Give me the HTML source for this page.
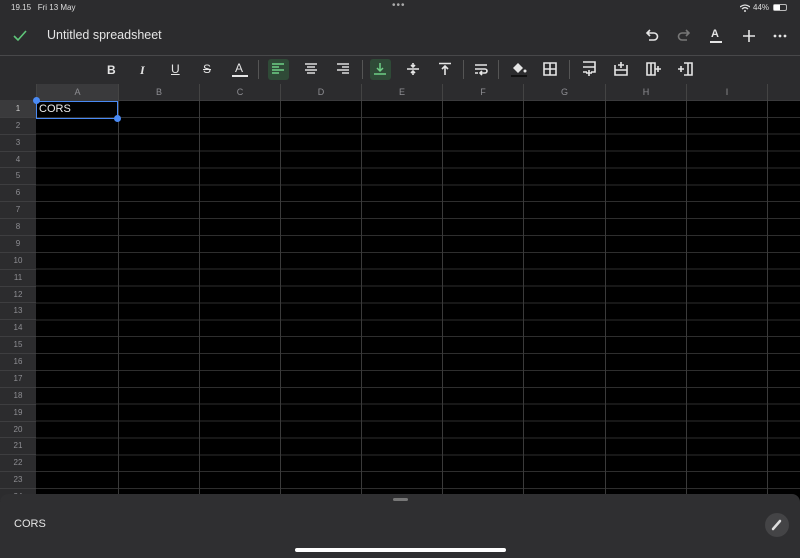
<!DOCTYPE html>
<html><head><meta charset="utf-8"><style>
*{margin:0;padding:0;box-sizing:border-box}
body{width:800px;height:558px;overflow:hidden;background:#000;font-family:"Liberation Sans",sans-serif;position:relative;color:#ddd}
.abs{position:absolute}
#top{left:0;top:0;width:800px;height:56px;background:#2c2c2e;border-bottom:1px solid #48484a}
#tb{left:0;top:56px;width:800px;height:28px;background:#2c2c2e}
#colh{left:0;top:84px;width:800px;height:17px;background:#2c2c2e;border-bottom:1px solid #3a3a3c}
.ch{position:absolute;top:0;height:17px;font-size:9px;color:#8e8e93;text-align:center;line-height:17px;border-left:1px solid #444}
#rowh{left:0;top:101px;width:36px;height:400px;background:#2c2c2e}
.rh{position:absolute;left:0;width:36px;height:16.87px;font-size:8px;color:#8e8e93;text-align:center;line-height:16px;border-bottom:1px solid #3e3e40}
#grid{left:36px;top:101px;width:764px;height:400px;
background-image:repeating-linear-gradient(to bottom,transparent 0,transparent 15.87px,#2e2e2e 15.87px,#2e2e2e 16.87px)}
.vl{position:absolute;top:101px;width:1px;height:400px;background:#3a3a3a}
#bot{left:0;top:494px;width:800px;height:64px;background:#2f2f31;border-radius:8px 8px 0 0}
svg{position:absolute}
.ic{stroke:#e5e5e5;fill:none;stroke-width:1.6}
</style></head><body>
<div id="top" class="abs">
 <div class="abs" style="left:11px;top:3px;font-size:8px;color:#ddd">19.15&nbsp;&nbsp;&nbsp;Fri 13 May</div>
 <div class="abs" style="left:392px;top:0px;font-size:10px;color:#aaa;letter-spacing:1px">•••</div>
 <svg style="left:740px;top:4px" width="10" height="8"><path d="M0 3 Q5 -1 10 3 M2 5 Q5 2 8 5" stroke="#ddd" fill="none" stroke-width="1.3"/><circle cx="5" cy="7" r="1" fill="#ddd"/></svg>
 <div class="abs" style="left:753px;top:3px;font-size:8px;color:#ddd">44%</div>
 <div class="abs" style="left:773px;top:4px;width:14px;height:7px;border:1px solid #bbb;border-radius:2px"><div style="width:6px;height:5px;background:#fff"></div></div>
 <svg style="left:12px;top:29px" width="16" height="14"><path d="M2 7 L6 11 L14 2" stroke="#5fc77a" stroke-width="1.6" fill="none"/></svg>
 <div class="abs" style="left:47px;top:28px;font-size:12.5px;color:#e5e5e5">Untitled spreadsheet</div>
 <svg style="left:645px;top:29px" width="14" height="14"><path class="ic" d="M3 4 H9 A3.5 3.5 0 0 1 9 11 H4 M5 1 L2 4 L5 7"/></svg>
 <svg style="left:677px;top:29px" width="14" height="14"><path d="M11 4 H5 A3.5 3.5 0 0 0 5 11 H10 M9 1 L12 4 L9 7" stroke="#777" fill="none" stroke-width="1.6"/></svg>
 <div class="abs" style="left:711px;top:28px;font-size:11px;font-weight:bold;color:#e5e5e5">A</div>
 <div class="abs" style="left:710px;top:41px;width:12px;height:2px;background:#e5e5e5"></div>
 <svg style="left:742px;top:29px" width="14" height="14"><path class="ic" d="M7 1 V13 M1 7 H13"/></svg>
 <svg style="left:773px;top:34px" width="14" height="4"><circle cx="2" cy="2" r="1.4" fill="#e5e5e5"/><circle cx="7" cy="2" r="1.4" fill="#e5e5e5"/><circle cx="12" cy="2" r="1.4" fill="#e5e5e5"/></svg>
</div>
<div id="tb" class="abs">
 <div class="abs" style="left:107px;top:7px;font-size:12px;font-weight:bold;color:#e5e5e5">B</div>
 <div class="abs" style="left:140px;top:7px;font-size:12px;font-style:italic;font-weight:bold;color:#e5e5e5;font-family:'Liberation Serif',serif">I</div>
 <div class="abs" style="left:171px;top:6px;font-size:12px;color:#e5e5e5;text-decoration:underline">U</div>
 <div class="abs" style="left:203px;top:6px;font-size:12px;color:#e5e5e5;text-decoration:line-through">S</div>
 <div class="abs" style="left:235px;top:5px;font-size:12px;color:#e5e5e5">A</div>
 <div class="abs" style="left:232px;top:19px;width:16px;height:2px;background:#e5e5e5"></div>
 <div class="abs" style="left:258px;top:4px;width:1px;height:19px;background:#555"></div>
 <div class="abs" style="left:268px;top:3px;width:21px;height:21px;background:#2f4a37;border-radius:3px"></div>
 <svg style="left:271px;top:6px" width="14" height="14"><path d="M1 2 H13 M1 5 H8 M1 8 H13 M1 11 H8" stroke="#6fcf86" stroke-width="1.5"/></svg>
 <svg style="left:304px;top:6px" width="14" height="14"><path d="M1 2 H13 M3 5 H11 M1 8 H13 M3 11 H11" stroke="#ddd" stroke-width="1.5"/></svg>
 <svg style="left:336px;top:6px" width="14" height="14"><path d="M1 2 H13 M6 5 H13 M1 8 H13 M6 11 H13" stroke="#ddd" stroke-width="1.5"/></svg>
 <div class="abs" style="left:362px;top:4px;width:1px;height:19px;background:#555"></div>
 <div class="abs" style="left:370px;top:3px;width:21px;height:21px;background:#2f4a37;border-radius:3px"></div>
 <svg style="left:373px;top:6px" width="14" height="14"><path d="M7 1 V9 M4 6 L7 9 L10 6 M1 12 H13" stroke="#6fcf86" stroke-width="1.5" fill="none"/></svg>
 <svg style="left:406px;top:6px" width="14" height="14"><path d="M1 7 H13 M7 1 V5 M5 3 L7 5 L9 3 M7 13 V9 M5 11 L7 9 L9 11" class="ic" stroke-width="1.3"/></svg>
 <svg style="left:438px;top:6px" width="14" height="14"><path d="M1 1.5 H13 M7 4 V13 M4 7 L7 4 L10 7" class="ic" stroke-width="1.4"/></svg>
 <div class="abs" style="left:463px;top:4px;width:1px;height:19px;background:#555"></div>
 <svg style="left:474px;top:6px" width="14" height="14"><path d="M1 3 H13 M1 7 H11 A2 2 0 0 1 11 11 H7 M8 9 L6 11 L8 13 M1 11 H4" class="ic" stroke-width="1.3"/></svg>
 <div class="abs" style="left:498px;top:4px;width:1px;height:19px;background:#555"></div>
 <svg style="left:510px;top:4px" width="18" height="18"><path d="M3 8 L8 3 L13 8 L8 13 Z" fill="#e5e5e5"/><circle cx="15" cy="11" r="1.5" fill="#e5e5e5"/><rect x="1" y="15" width="16" height="2" fill="#111"/></svg>
 <svg style="left:543px;top:6px" width="14" height="14"><path d="M1 1 H13 V13 H1 Z M7 1 V13 M1 7 H13" class="ic" stroke-width="1.4"/></svg>
 <div class="abs" style="left:569px;top:4px;width:1px;height:19px;background:#555"></div>
 <svg style="left:582px;top:5px" width="14" height="16"><path d="M1 1 H13 V11 H9 M5 11 H1 Z M1 6 H13 M7 9 V15 M4 12 H10" class="ic" stroke-width="1.3"/></svg>
 <svg style="left:614px;top:5px" width="14" height="16"><path d="M1 4 V14 H13 V4 M1 9 H13 M7 1 V7 M4 4 H10" class="ic" stroke-width="1.3"/></svg>
 <svg style="left:646px;top:5px" width="16" height="16"><path d="M1 2 H9 V14 H1 Z M5 2 V14 M9 8 H15 M12 5 V11" class="ic" stroke-width="1.3"/></svg>
 <svg style="left:677px;top:5px" width="16" height="16"><path d="M7 2 H15 V14 H7 M11 2 V14 M1 8 H7 M4 5 V11" class="ic" stroke-width="1.3"/></svg>
</div>
<div id="colh" class="abs">
 <div class="ch" style="left:36px;width:82px;background:#3a3a3c">A</div>
 <div class="ch" style="left:118px;width:81px">B</div>
 <div class="ch" style="left:199px;width:81px">C</div>
 <div class="ch" style="left:280px;width:81px">D</div>
 <div class="ch" style="left:361px;width:81px">E</div>
 <div class="ch" style="left:442px;width:81px">F</div>
 <div class="ch" style="left:523px;width:82px">G</div>
 <div class="ch" style="left:605px;width:81px">H</div>
 <div class="ch" style="left:686px;width:81px">I</div>
 <div class="ch" style="left:767px;width:40px"></div>
</div>
<div id="grid" class="abs"></div>
<div class="vl" style="left:118px"></div><div class="vl" style="left:199px"></div><div class="vl" style="left:280px"></div>
<div class="vl" style="left:361px"></div><div class="vl" style="left:442px"></div><div class="vl" style="left:523px"></div>
<div class="vl" style="left:605px"></div><div class="vl" style="left:686px"></div><div class="vl" style="left:767px"></div>
<div id="rowh" class="abs">
 <div class="rh" style="top:0;background:#3a3a3c;color:#ccc">1</div>
 <div class="rh" style="top:16.87px">2</div><div class="rh" style="top:33.74px">3</div><div class="rh" style="top:50.61px">4</div>
 <div class="rh" style="top:67.48px">5</div><div class="rh" style="top:84.35px">6</div><div class="rh" style="top:101.22px">7</div>
 <div class="rh" style="top:118.09px">8</div><div class="rh" style="top:134.96px">9</div><div class="rh" style="top:151.83px">10</div>
 <div class="rh" style="top:168.7px">11</div><div class="rh" style="top:185.57px">12</div><div class="rh" style="top:202.44px">13</div>
 <div class="rh" style="top:219.31px">14</div><div class="rh" style="top:236.18px">15</div><div class="rh" style="top:253.05px">16</div>
 <div class="rh" style="top:269.92px">17</div><div class="rh" style="top:286.79px">18</div><div class="rh" style="top:303.66px">19</div>
 <div class="rh" style="top:320.53px">20</div><div class="rh" style="top:337.4px">21</div><div class="rh" style="top:354.27px">22</div>
 <div class="rh" style="top:371.14px">23</div><div class="rh" style="top:388px">24</div>
</div>
<div class="abs" style="left:36px;top:101px;width:82px;height:18px;border:1.5px solid #4a8af4"></div>
<div class="abs" style="left:39px;top:103px;font-size:11px;color:#eee">CORS</div>
<div class="abs" style="left:33px;top:97px;width:7px;height:7px;border-radius:50%;background:#4a8af4"></div>
<div class="abs" style="left:114px;top:115px;width:7px;height:7px;border-radius:50%;background:#4a8af4"></div>
<div id="bot" class="abs">
 <div class="abs" style="left:393px;top:4px;width:15px;height:3px;border-radius:2px;background:#777"></div>
 <div class="abs" style="left:14px;top:24px;font-size:11px;color:#e5e5e5">CORS</div>
 <div class="abs" style="left:765px;top:19px;width:24px;height:24px;border-radius:50%;background:#444446"></div>
 <svg style="left:770px;top:24px" width="14" height="14"><path d="M3 11 L10 3" stroke="#ddd" stroke-width="2.5" stroke-linecap="round"/></svg>
 <div class="abs" style="left:295px;top:54px;width:211px;height:4px;border-radius:2px;background:#fff"></div>
</div>
</body></html>
